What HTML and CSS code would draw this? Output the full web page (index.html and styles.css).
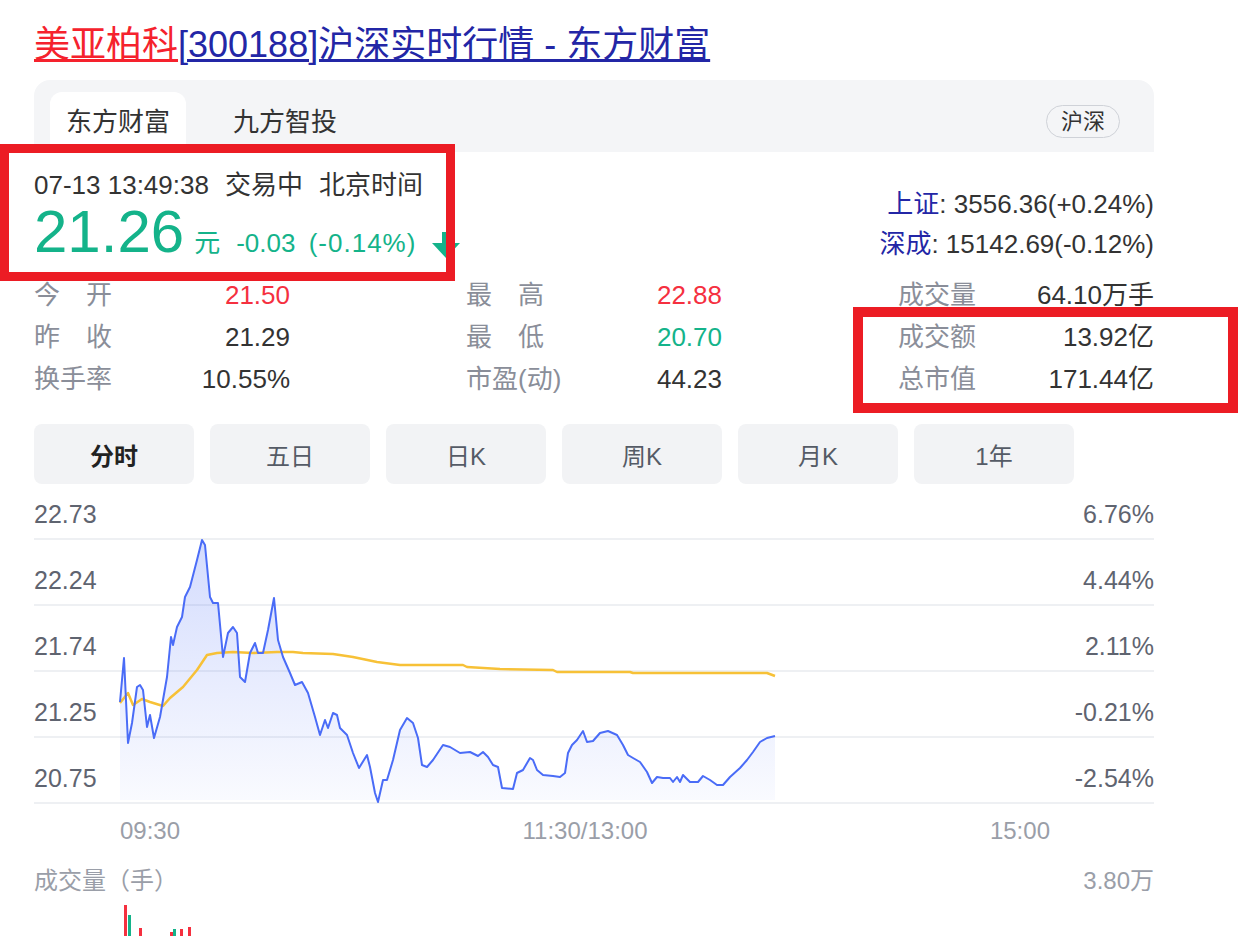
FILE: index.html
```html
<!DOCTYPE html>
<html lang="zh-CN">
<head>
    <meta charset="UTF-8">
    <meta name="viewport" content="width=device-width, initial-scale=1.0">
    <title>美亚柏科[300188]沪深实时行情 - 东方财富</title>
    <link rel="stylesheet" href="styles.css">
</head>
<body>
    <div class="page">
        <h1 class="title">
            <a href="#"><span class="title-name">美亚柏科</span><span class="title-rest">[300188]沪深实时行情 - 东方财富</span></a>
        </h1>

        <div class="card">
            <div class="card-head">
                <div class="tabs">
                    <span class="tab active">东方财富</span>
                    <span class="tab">九方智投</span>
                </div>
                <span class="market">沪深</span>
            </div>

            <div class="quote">
                <div class="quote-main">
                    <div class="quote-time">
                        <span>07-13 13:49:38</span>
                        <span>交易中</span>
                        <span>北京时间</span>
                    </div>
                    <div class="quote-price">
                        <span class="price">21.26</span>
                        <span class="unit">元</span>
                        <span class="change">-0.03 <span class="change-pct">(-0.14%)</span></span>
                        <svg class="arrow" viewBox="0 0 28 26" width="28" height="26">
                            <rect x="10" y="0" width="8" height="13" fill="#14b38a"/>
                            <polygon points="0,11 28,11 14,26" fill="#14b38a"/>
                        </svg>
                    </div>
                </div>
                <div class="index-list">
                    <div><span class="index-name">上证</span>: 3556.36(+0.24%)</div>
                    <div><span class="index-name">深成</span>: 15142.69(-0.12%)</div>
                </div>
            </div>

            <div class="stats">
                <div class="stat"><span class="stat-label">今　开</span><span class="stat-value up">21.50</span></div>
                <div class="stat"><span class="stat-label">最　高</span><span class="stat-value up">22.88</span></div>
                <div class="stat"><span class="stat-label">成交量</span><span class="stat-value">64.10万手</span></div>
                <div class="stat"><span class="stat-label">昨　收</span><span class="stat-value">21.29</span></div>
                <div class="stat"><span class="stat-label">最　低</span><span class="stat-value down">20.70</span></div>
                <div class="stat"><span class="stat-label">成交额</span><span class="stat-value">13.92亿</span></div>
                <div class="stat"><span class="stat-label">换手率</span><span class="stat-value">10.55%</span></div>
                <div class="stat"><span class="stat-label">市盈(动)</span><span class="stat-value">44.23</span></div>
                <div class="stat"><span class="stat-label">总市值</span><span class="stat-value">171.44亿</span></div>
            </div>

            <div class="periods">
                <button class="period active">分时</button>
                <button class="period">五日</button>
                <button class="period">日K</button>
                <button class="period">周K</button>
                <button class="period">月K</button>
                <button class="period">1年</button>
            </div>

            <div class="chart">
                <div class="axis-row"><span>22.73</span><span>6.76%</span></div>
                <div class="axis-row"><span>22.24</span><span>4.44%</span></div>
                <div class="axis-row"><span>21.74</span><span>2.11%</span></div>
                <div class="axis-row"><span>21.25</span><span>-0.21%</span></div>
                <div class="axis-row"><span>20.75</span><span>-2.54%</span></div>

                <svg class="chart-plot" viewBox="34 484 1120 320" width="1120" height="320">
                    <defs>
                        <linearGradient id="area" x1="0" y1="0" x2="0" y2="1">
                            <stop offset="0" stop-color="#4a6cf7" stop-opacity="0.24"/>
                            <stop offset="1" stop-color="#4a6cf7" stop-opacity="0.03"/>
                        </linearGradient>
                    </defs>
                    <polygon class="price-area" points="120,702 124,658 128,743 132,723 137,687 140,685 143,690 147,727 150,715 154,738 160,717 167,677 171,637 173,645 177,627 182,617 185,597 190,587 197,560 202,540 205,545 210,597 213,603 218,603 223,657 228,633 233,627 237,633 240,677 245,682 250,653 255,643 258,653 263,653 268,630 274,598 278,640 283,657 290,673 295,685 302,682 308,693 315,717 320,735 325,720 328,728 333,713 337,715 340,728 347,735 353,753 359,768 367,755 370,767 375,793 378,802 383,780 387,780 393,760 400,730 407,718 413,723 418,738 422,765 427,767 433,760 443,745 450,747 460,753 470,752 478,756 483,752 488,757 493,765 498,767 502,788 513,789 517,773 523,770 530,758 533,760 537,770 543,775 553,776 560,777 565,773 568,753 572,745 577,740 583,731 587,742 593,741 600,733 608,731 617,735 623,745 628,755 633,758 640,762 647,772 652,783 657,777 663,778 670,778 673,782 677,777 680,782 683,775 690,782 698,782 703,776 710,780 717,785 723,785 730,777 740,768 747,760 753,752 760,742 767,738 775,736 775,800 120,800"/>
                    <polyline class="avg-line" points="120,703 128,693 133,705 142,699 150,702 163,706 170,698 183,687 197,670 207,655 217,653 233,652 253,653 277,652 293,652 303,653 333,654 353,657 377,662 400,665 463,665 467,667 500,669 553,670 557,672 630,672 633,673 767,673 775,676"/>
                    <polyline class="price-line" points="120,702 124,658 128,743 132,723 137,687 140,685 143,690 147,727 150,715 154,738 160,717 167,677 171,637 173,645 177,627 182,617 185,597 190,587 197,560 202,540 205,545 210,597 213,603 218,603 223,657 228,633 233,627 237,633 240,677 245,682 250,653 255,643 258,653 263,653 268,630 274,598 278,640 283,657 290,673 295,685 302,682 308,693 315,717 320,735 325,720 328,728 333,713 337,715 340,728 347,735 353,753 359,768 367,755 370,767 375,793 378,802 383,780 387,780 393,760 400,730 407,718 413,723 418,738 422,765 427,767 433,760 443,745 450,747 460,753 470,752 478,756 483,752 488,757 493,765 498,767 502,788 513,789 517,773 523,770 530,758 533,760 537,770 543,775 553,776 560,777 565,773 568,753 572,745 577,740 583,731 587,742 593,741 600,733 608,731 617,735 623,745 628,755 633,758 640,762 647,772 652,783 657,777 663,778 670,778 673,782 677,777 680,782 683,775 690,782 698,782 703,776 710,780 717,785 723,785 730,777 740,768 747,760 753,752 760,742 767,738 775,736"/>
                </svg>
            </div>

            <div class="x-axis">
                <span>09:30</span>
                <span>11:30/13:00</span>
                <span>15:00</span>
            </div>

            <div class="volume-head">
                <span>成交量（手）</span>
                <span>3.80万</span>
            </div>
            <svg class="volume" viewBox="34 904 1120 32" width="1120" height="32">
                <rect class="bar-up" x="124" y="905" width="3" height="31"/>
                <rect class="bar-down" x="128" y="915" width="3" height="21"/>
                <rect class="bar-up" x="139" y="928" width="3" height="8"/>
                <rect class="bar-up" x="170" y="932" width="3" height="4"/>
                <rect class="bar-down" x="173" y="929" width="3" height="7"/>
                <rect class="bar-up" x="180" y="929" width="3" height="7"/>
                <rect class="bar-up" x="188" y="927" width="3" height="9"/>
            </svg>
        </div>

        <div class="mark mark-price"></div>
        <div class="mark mark-amount"></div>
    </div>
</body>
</html>
```

FILE: styles.css
```css
* {
    box-sizing: border-box;
}

body {
    margin: 0;
    font-family: "Liberation Sans", "Noto Sans CJK SC", sans-serif;
    color: #333333;
    background: #ffffff;
}

.page {
    position: relative;
    width: 1154px;
    padding: 22px 0 0 34px;
}

.title {
    margin: 0;
    font-size: 36px;
    line-height: 46px;
    font-weight: normal;
    white-space: nowrap;
}

.title a {
    text-decoration: none;
}

.title-name {
    color: #f5222d;
    text-decoration: underline;
}

.title-rest {
    color: #2326a6;
    text-decoration: underline;
}

.card {
    margin-top: 12px;
}

.card-head {
    display: flex;
    justify-content: space-between;
    align-items: flex-end;
    height: 72px;
    padding: 0 34px 0 16px;
    background: #f4f5f7;
    border-radius: 16px 16px 0 0;
}

.tabs {
    display: flex;
    gap: 31px;
}

.tab {
    height: 60px;
    line-height: 60px;
    padding: 0 16px;
    font-size: 26px;
    color: #333333;
}

.tab.active {
    background: #ffffff;
    border-radius: 12px 12px 0 0;
}

.market {
    margin-bottom: 14px;
    padding: 0 14px;
    height: 33px;
    line-height: 31px;
    font-size: 22px;
    color: #333333;
    border: 1px solid #cfd2d8;
    border-radius: 17px;
}

.quote {
    display: flex;
    justify-content: space-between;
    padding-top: 16px;
}

.quote-time {
    display: flex;
    gap: 16px;
    font-size: 26px;
    line-height: 34px;
    color: #333333;
}

.quote-price {
    display: flex;
    align-items: baseline;
    height: 60px;
    line-height: 60px;
    color: #14b38a;
}

.price {
    font-size: 60px;
}

.unit {
    margin-left: 10px;
    font-size: 26px;
}

.change {
    margin-left: 16px;
    font-size: 26px;
}

.change-pct {
    margin-left: 6px;
    letter-spacing: 1px;
}

.arrow {
    align-self: flex-end;
    margin: 0 0 4px 16px;
}

.index-list {
    padding-top: 16px;
    text-align: right;
    font-size: 26px;
    line-height: 40px;
    color: #333333;
}

.index-name {
    color: #2326a6;
}

.stats {
    display: grid;
    grid-template-columns: repeat(3, 256px);
    column-gap: 176px;
    margin-top: 10px;
    font-size: 26px;
    line-height: 42px;
}

.stat {
    display: flex;
    justify-content: space-between;
}

.stat-label {
    color: #8a8e99;
}

.stat-value {
    color: #333333;
}

.stat-value.up {
    color: #f5303f;
}

.stat-value.down {
    color: #14b38a;
}

.periods {
    display: flex;
    gap: 16px;
    margin-top: 24px;
}

.period {
    width: 160px;
    height: 60px;
    padding: 0;
    border: none;
    border-radius: 8px;
    background: #f2f3f5;
    font-family: inherit;
    font-size: 24px;
    color: #555b66;
}

.period.active {
    font-weight: bold;
    color: #222222;
}

.chart {
    position: relative;
    font-size: 25px;
    color: #5f6470;
}

.axis-row {
    display: flex;
    justify-content: space-between;
    align-items: flex-end;
    height: 66px;
    padding-bottom: 7px;
    line-height: 34px;
    border-bottom: 2px solid #eef0f3;
}

.axis-row:first-child {
    height: 56px;
}

.chart-plot {
    position: absolute;
    left: 0;
    top: 0;
}

.price-area {
    fill: url(#area);
}

.price-line {
    fill: none;
    stroke: #4a6cf7;
    stroke-width: 2;
    stroke-linejoin: round;
}

.avg-line {
    fill: none;
    stroke: #f7c137;
    stroke-width: 2.5;
    stroke-linejoin: round;
}

.x-axis {
    display: flex;
    justify-content: space-between;
    height: 54px;
    padding: 0 104px 0 86px;
    line-height: 54px;
    font-size: 24px;
    color: #9a9ea8;
}

.volume-head {
    display: flex;
    justify-content: space-between;
    height: 46px;
    line-height: 46px;
    font-size: 24px;
    color: #9a9ea8;
}

.volume {
    display: block;
}

.bar-up {
    fill: #f5303f;
}

.bar-down {
    fill: #14b38a;
}

.mark {
    position: absolute;
    border: 9px solid #ec1c24;
}

.mark-price {
    left: 0;
    top: 144px;
    width: 455px;
    height: 137px;
}

.mark-amount {
    left: 853px;
    top: 307px;
    width: 385px;
    height: 106px;
    border-width: 10px;
}
```
